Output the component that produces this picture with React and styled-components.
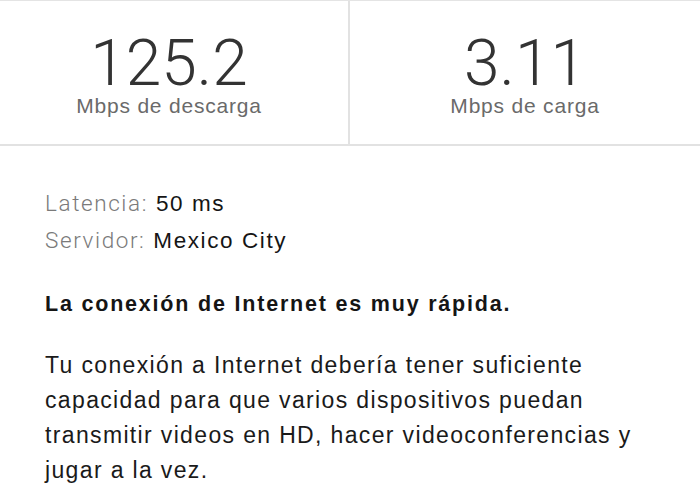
import React from 'react'
import styled, { createGlobalStyle } from 'styled-components'

const Global = createGlobalStyle`
  html, body {
    margin: 0;
    padding: 0;
    background: #fff;
  }
  body {
    font-family: "Liberation Sans", Arial, sans-serif;
    -webkit-font-smoothing: antialiased;
  }
`

const Page = styled.div`
  width: 700px;
  height: 500px;
  overflow: hidden;
  background: #fff;
`

const Stats = styled.div`
  display: grid;
  grid-template-columns: 348px 2px 1fr;
  border-top: 1px solid #e4e4e4;
  border-bottom: 2px solid #e2e2e2;
`

const Divider = styled.div`
  background: #e2e2e2;
`

const Stat = styled.div`
  display: flex;
  flex-direction: column;
  align-items: center;
  padding: 33px ${props => props.$shift || 0}px 26px 0;
`

const Value = styled.div`
  font-family: Roboto, "Liberation Sans", sans-serif;
  font-weight: 300;
  font-size: 64px;
  line-height: 60px;
  color: #333;
`

const Unit = styled.div`
  font-size: 21px;
  line-height: 24px;
  letter-spacing: 0.8px;
  color: #6a6a6a;
`

const Details = styled.div`
  padding: 39px 45px 0;
`

const InfoLine = styled.div`
  font-size: 22.5px;
  line-height: 37px;
  letter-spacing: 1.6px;
  color: #151515;
`

const Key = styled.span`
  font-family: Roboto, "Liberation Sans", sans-serif;
  font-weight: 300;
  color: #7a7a7a;
`

const Heading = styled.div`
  margin-top: 30px;
  font-size: 21.5px;
  line-height: 30px;
  font-weight: 700;
  letter-spacing: 1.8px;
  color: #151515;
`

const Paragraph = styled.p`
  margin: 29px 0 0;
  font-size: 23px;
  line-height: 35px;
  letter-spacing: 1.35px;
  color: #1a1a1a;
`

const stats = [
  { value: '125.2', unit: 'Mbps de descarga', shift: 10 },
  { value: '3.11', unit: 'Mbps de carga', shift: 0 },
]

export default function App() {
  return (
    <Page>
      <Global />
      <Stats>
        <Stat $shift={stats[0].shift}>
          <Value>{stats[0].value}</Value>
          <Unit>{stats[0].unit}</Unit>
        </Stat>
        <Divider />
        <Stat $shift={stats[1].shift}>
          <Value>{stats[1].value}</Value>
          <Unit>{stats[1].unit}</Unit>
        </Stat>
      </Stats>
      <Details>
        <InfoLine><Key>Latencia:</Key> 50 ms</InfoLine>
        <InfoLine><Key>Servidor:</Key> Mexico City</InfoLine>
        <Heading>La conexión de Internet es muy rápida.</Heading>
        <Paragraph>
          Tu conexión a Internet debería tener suficiente<br />
          capacidad para que varios dispositivos puedan<br />
          transmitir videos en HD, hacer videoconferencias y<br />
          jugar a la vez.
        </Paragraph>
      </Details>
    </Page>
  )
}
